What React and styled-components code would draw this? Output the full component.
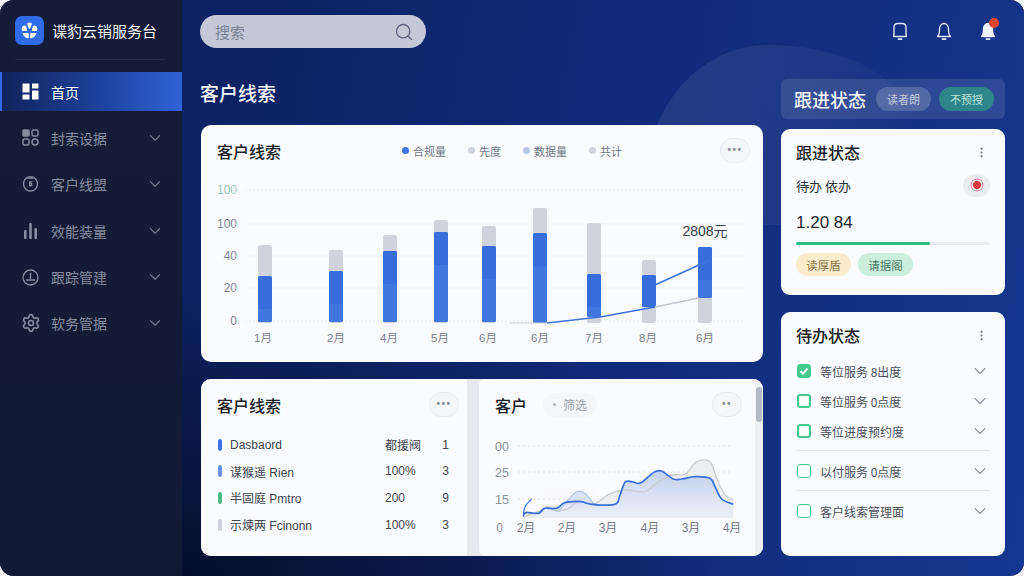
// App.jsx
import React from 'react';
import styled, { createGlobalStyle } from 'styled-components';
import { ChevronDown, Search, Settings, MoreVertical } from 'lucide-react';

const GlobalStyle = createGlobalStyle`
  html, body {
    margin: 0;
    padding: 0;
    background: #f4f6fa;
  }
  * {
    box-sizing: border-box;
  }
  body {
    font-family: 'Liberation Sans', 'Noto Sans CJK SC', sans-serif;
  }
`;

const Shell = styled.div`
  width: 1024px;
  height: 576px;
  display: flex;
  overflow: hidden;
  border-radius: 14px;
  background: #0c1f5c;
`;

const Sidebar = styled.aside`
  width: 182px;
  flex-shrink: 0;
  display: flex;
  flex-direction: column;
  background: linear-gradient(180deg, #141c37 0%, #131b36 60%, #111a35 100%);
`;

const Brand = styled.div`
  height: 60px;
  margin: 0 17px 0 15px;
  padding-top: 1px;
  display: flex;
  align-items: center;
  gap: 8px;
  border-bottom: 1px solid #222b47;
  color: #f1f4fb;
  font-size: 15px;
  font-family: 'Noto Sans CJK SC', sans-serif;
  white-space: nowrap;
`;

const LogoBox = styled.div`
  width: 29px;
  height: 29px;
  border-radius: 7px;
  background: #2f6be6;
  display: flex;
  align-items: center;
  justify-content: center;
`;

const Nav = styled.nav`
  margin-top: 12px;
  display: flex;
  flex-direction: column;
  gap: 7.4px;
`;

const NavItem = styled.div`
  height: 39px;
  display: flex;
  align-items: center;
  padding: 0 18px 0 ${(p) => (p.$active ? '20px' : '22px')};
  gap: 12px;
  font-family: 'Noto Sans CJK SC', sans-serif;
  font-size: 14px;
  color: ${(p) => (p.$active ? '#ffffff' : '#868da0')};
  background: ${(p) => (p.$active ? 'linear-gradient(90deg, #11245b 0%, #1c3f97 50%, #2f62d6 100%)' : 'transparent')};
  border-left: ${(p) => (p.$active ? '2px solid #2f6be6' : 'none')};
`;

const NavIcon = styled.span`
  width: 17px;
  display: flex;
  justify-content: center;
  flex-shrink: 0;

  svg {
    flex-shrink: 0;
  }
`;

const NavLabel = styled.span`
  flex: 1;
  white-space: nowrap;
`;

const Main = styled.main`
  position: relative;
  flex: 1;
  min-width: 0;
  padding: 15px 19px 20px 18px;
  background:
    radial-gradient(ellipse 560px 300px at 0% 100%, #050e2c 0%, rgba(5, 14, 44, 0) 100%),
    linear-gradient(100deg, #0c2160 0%, #0f2a78 50%, #16378f 100%);

  /* the pale blob behind the cards */
  &::before {
    content: '';
    position: absolute;
    left: 463px;
    top: 45px;
    width: 270px;
    height: 180px;
    border-radius: 58% 70% 0 0 / 100% 60% 0 0;
    background: linear-gradient(105deg, rgba(255, 255, 255, 0.085) 0%, rgba(255, 255, 255, 0.05) 55%, rgba(255, 255, 255, 0) 95%);
  }
`;

const TopBar = styled.div`
  position: relative;
  height: 33px;
  display: flex;
  align-items: center;
  justify-content: space-between;
`;

const SearchBox = styled.div`
  width: 226px;
  height: 33px;
  border-radius: 17px;
  background: #c4c9d8;
  display: flex;
  align-items: center;
  justify-content: space-between;
  padding: 0 12px 0 15px;
  color: #7b8296;
  font-size: 15px;
  font-family: 'Noto Sans CJK SC', sans-serif;
`;

const BellGroup = styled.div`
  display: flex;
  align-items: center;
  gap: 26px;
  margin: 1px 8px 0 0;
`;

const BellWrap = styled.div`
  position: relative;
  width: 18px;
  height: 20px;
  color: #e6ecfa;
`;

const BellDot = styled.span`
  position: absolute;
  top: -4px;
  right: -2px;
  width: 10px;
  height: 10px;
  border-radius: 50%;
  background: #e8452f;
`;

const Content = styled.div`
  position: relative;
  margin-top: 31px;
  display: grid;
  grid-template-columns: 563px 224px;
  column-gap: 18px;
`;

const LeftColumn = styled.div`
  display: flex;
  flex-direction: column;
  padding-left: 1px;
`;

const RightColumn = styled.div`
  display: flex;
  flex-direction: column;
`;

const PageTitle = styled.h1`
  margin: 0 0 18px -1px;
  height: 28px;
  line-height: 28px;
  font-size: 19px;
  font-weight: 500;
  color: #f5f7fd;
  font-family: 'Noto Sans CJK SC', sans-serif;
`;

const Card = styled.section`
  position: relative;
  background: #fafbfe;
  border-radius: ${(p) => p.$radius || '10px'};
  height: ${(p) => p.$height}px;
  overflow: hidden;
`;

const CardHeader = styled.div`
  display: flex;
  align-items: center;
  height: 50px;
  padding: ${(p) => p.$pad || '1px 13px 0 16px'};
`;

const CardTitle = styled.h2`
  margin: 0;
  font-size: 16px;
  font-weight: 500;
  color: #1b1e26;
  font-family: 'Noto Sans CJK SC', sans-serif;
  white-space: nowrap;
`;

const Legend = styled.div`
  margin-left: 121px;
  display: flex;
  gap: 22px;
`;

const LegendItem = styled.div`
  display: flex;
  align-items: center;
  gap: 4px;
  font-size: 11px;
  color: #6f7684;
  font-family: 'Noto Sans CJK SC', sans-serif;
  white-space: nowrap;

  &::before {
    content: '';
    width: 7px;
    height: 7px;
    border-radius: 50%;
    background: ${(p) => p.$color};
  }
`;

const MoreButton = styled.button`
  margin-left: auto;
  width: 30px;
  height: 25px;
  padding: 0 0 1px;
  border: 1px solid #e8eaf0;
  border-radius: 12px;
  background: #f5f6f9;
  color: #8a8f9a;
  font-size: 10px;
  font-weight: 700;
  letter-spacing: 1.5px;
  line-height: 1;
  font-family: 'Liberation Sans', sans-serif;
`;

const ChartSvg = styled.svg`
  display: block;
  font-family: 'Liberation Sans', 'Noto Sans CJK SC', sans-serif;
`;

const BottomRow = styled.div`
  margin-top: 17px;
  height: 177px;
  display: grid;
  grid-template-columns: 266px 284px;
  column-gap: 12px;
  background: #e7e9ef;
  border-radius: 10px;
`;

const LeadList = styled.div`
  padding: 0 18px 0 17px;
  margin-top: 2.500px;
`;

const LeadRow = styled.div`
  height: 26.6px;
  display: grid;
  grid-template-columns: 12px 155px 1fr auto;
  align-items: center;
  font-size: 12px;
  color: #3f4450;
  white-space: nowrap;
`;

const LeadMark = styled.span`
  width: 3.5px;
  height: 12px;
  border-radius: 2px;
  background: ${(p) => p.$color};
`;

const FilterChip = styled.span`
  margin-left: 16px;
  height: 24px;
  padding: 0 10px;
  border-radius: 12px;
  background: #f5f6f9;
  display: flex;
  align-items: center;
  gap: 7px;
  font-size: 12px;
  color: #9fa3ad;
  font-family: 'Noto Sans CJK SC', sans-serif;

  &::before {
    content: '';
    width: 3px;
    height: 3px;
    border-radius: 50%;
    background: #b5bac4;
  }
`;

const ScrollThumb = styled.div`
  position: absolute;
  top: 8px;
  right: 1px;
  width: 6px;
  height: 35px;
  border-radius: 3px;
  background: #b4b9c4;
`;

const ScrollTrack = styled.div`
  position: absolute;
  top: 0;
  right: 0;
  bottom: 0;
  width: 8px;
  background: #eef0f4;
`;

const StatusBar = styled.div`
  height: 40px;
  display: flex;
  align-items: center;
  padding: 0 10px 0 13px;
  gap: 8px;
  border-radius: 6px;
  background: rgba(255, 255, 255, 0.11);
  font-family: 'Noto Sans CJK SC', sans-serif;
`;

const StatusTitle = styled.div`
  margin-right: 2px;
  font-size: 18px;
  font-weight: 500;
  color: #f2f5fc;
  white-space: nowrap;
`;

const StatusChip = styled.span`
  width: 55px;
  height: 24px;
  border-radius: 12px;
  display: flex;
  align-items: center;
  justify-content: center;
  font-size: 11px;
  color: ${(p) => (p.$teal ? '#bfe6de' : '#c4cbdd')};
  background: ${(p) => (p.$teal ? '#2f858a' : 'rgba(255, 255, 255, 0.18)')};
  white-space: nowrap;
`;

const SideCard = styled.section`
  margin-top: ${(p) => p.$top}px;
  height: ${(p) => p.$height}px;
  padding: 13px 15px 0;
  background: #fafbfe;
  border-radius: 9px;
  font-family: 'Noto Sans CJK SC', sans-serif;
`;

const SideHead = styled.div`
  display: flex;
  align-items: center;
  justify-content: space-between;
  height: 20px;
  padding-right: 2px;
  color: #6d7280;
`;

const TodoLine = styled.div`
  margin-top: 11px;
  display: flex;
  align-items: center;
  justify-content: space-between;
  font-size: 13px;
  color: #2c3038;
  height: 24px;
`;

const RecordBadge = styled.span`
  width: 27px;
  height: 23px;
  border-radius: 11px;
  background: #ecedf1;
  display: flex;
  align-items: center;
  justify-content: center;

  &::before {
    content: '';
    width: 8px;
    height: 8px;
    border-radius: 50%;
    background: #ea3a42;
    box-shadow: 0 0 0 1.5px #f8f8fa, 0 0 0 2.5px #e58a8f;
  }
`;

const BigNumber = styled.div`
  margin-top: 14px;
  font-size: 17px;
  line-height: 24px;
  color: #22262e;
  font-family: 'Liberation Sans', sans-serif;
`;

const Progress = styled.div`
  margin-top: 7px;
  height: 3px;
  border-radius: 2px;
  background: #e9ebef;
`;

const ProgressFill = styled.div`
  height: 100%;
  border-radius: 2px;
  background: #2fbd82;
`;

const TagRow = styled.div`
  margin-top: 8px;
  display: flex;
  gap: 7px;
`;

const Tag = styled.span`
  width: 55px;
  height: 23px;
  border-radius: 12px;
  display: flex;
  align-items: center;
  justify-content: center;
  font-size: 11.5px;
  color: ${(p) => (p.$green ? '#4d7a66' : '#8a7347')};
  background: ${(p) => (p.$green ? '#cbeedd' : '#fbeccb')};
  white-space: nowrap;
`;

const TodoList = styled.div`
  margin-top: 11px;
`;

const TodoRow = styled.div`
  height: 30px;
  display: flex;
  align-items: center;
  gap: 9px;
  padding-left: 1px;
  font-size: 12px;
  color: #4a4f5a;
  white-space: nowrap;
`;

const CheckBox = styled.span`
  width: 14px;
  height: 14px;
  flex-shrink: 0;
  border-radius: 3px;
  border: ${(p) => (p.$heavy ? '2px' : '1.7px')} solid #45c98c;
  background: ${(p) => (p.$checked ? '#45c98c' : '#fff')};
  display: flex;
  align-items: center;
  justify-content: center;
`;

const TodoText = styled.span`
  flex: 1;
`;

const Rule = styled.div`
  height: 1px;
  margin: 4px 0 5px;
  background: #e8eaee;
`;

// bar data: x, top of grey, top of blue, bottom of blue, label centre
const bars = [
  { x: 258, grey: 245, blue: 276, end: 322, label: '1月', lx: 263 },
  { x: 329, grey: 250, blue: 271, end: 322, label: '2月', lx: 336 },
  { x: 383, grey: 235, blue: 251, end: 322, label: '4月', lx: 389 },
  { x: 434, grey: 220, blue: 232, end: 322, label: '5月', lx: 440 },
  { x: 482, grey: 226, blue: 246, end: 322, label: '6月', lx: 488 },
  { x: 533, grey: 208, blue: 233, end: 323, label: '6月', lx: 540 },
  { x: 587, grey: 223, blue: 274, end: 317, label: '7月', lx: 594 },
  { x: 642, grey: 260, blue: 275, end: 307, label: '8月', lx: 648 },
  { x: 698, grey: 247, blue: 247, end: 298, label: '6月', lx: 705 },
];

const yTicks = [
  { y: 190, text: '100', color: '#9cc7b6' },
  { y: 224, text: '100', color: '#7e8490' },
  { y: 256, text: '40', color: '#7e8490' },
  { y: 288, text: '20', color: '#7e8490' },
  { y: 321, text: '0', color: '#7e8490' },
];

const BarChart = () => (
  <ChartSvg width="562" height="187" viewBox="201 175 562 187">
    {yTicks.map((t) => (
      <g key={t.y}>
        <text x="237" y={t.y + 4} textAnchor="end" fontSize="12" fill={t.color}>{t.text}</text>
        <line x1="245" x2="745" y1={t.y} y2={t.y} stroke="#eceef2" strokeDasharray="2 2" />
      </g>
    ))}
    {bars.map((b) => (
      <g key={b.x + b.label}>
        <rect x={b.x} y={b.grey} width="14" height={323 - b.grey} rx="2" fill="#d0d3db" />
        <rect x={b.x} y={b.blue} width="14" height={b.end - b.blue} rx="1.5" fill="#4076e0" />
        <rect x={b.x} y={b.blue} width="14" height={Math.min(33, b.end - b.blue)} rx="1.5" fill="#2f65d8" opacity="0.45" />
        <text x={b.lx} y="342" textAnchor="middle" fontSize="11.5" fill="#7c808a">{b.label}</text>
      </g>
    ))}
    <polyline points="510,323 547,323" fill="none" stroke="#c9cdd6" strokeWidth="1" />
    <polyline points="547,323 600,317 655,307" fill="none" stroke="#3f73dc" strokeWidth="1.6" />
    <polyline points="655,307 699,298" fill="none" stroke="#c4c7d0" strokeWidth="1.4" />
    <polyline points="655,285 710,260" fill="none" stroke="#3f73dc" strokeWidth="1.6" />
    <text x="705" y="236" textAnchor="middle" fontSize="14" fill="#3a3e47">2808元</text>
  </ChartSvg>
);

// catmull-rom through points read off the picture
const smooth = (pts) => {
  let d = `M${pts[0][0]} ${pts[0][1]}`;
  for (let i = 0; i < pts.length - 1; i++) {
    const p0 = pts[i - 1] || pts[i];
    const p1 = pts[i];
    const p2 = pts[i + 1];
    const p3 = pts[i + 2] || p2;
    const c1x = p1[0] + (p2[0] - p0[0]) / 6;
    const c1y = p1[1] + (p2[1] - p0[1]) / 6;
    const c2x = p2[0] - (p3[0] - p1[0]) / 6;
    const c2y = p2[1] - (p3[1] - p1[1]) / 6;
    d += ` C${c1x.toFixed(1)} ${c1y.toFixed(1)} ${c2x.toFixed(1)} ${c2y.toFixed(1)} ${p2[0].toFixed(1)} ${p2[1].toFixed(1)}`;
  }
  return d;
};

const toPage = (list) => list.map(([x, y]) => [475 + x / 3, 375 + y / 3]);

const bluePts = toPage([[145, 420], [155, 412], [190, 415], [210, 400], [245, 400], [265, 385], [290, 380], [320, 380], [350, 388], [420, 388], [435, 360], [450, 322], [470, 320], [495, 325], [520, 305], [540, 290], [560, 288], [595, 312], [620, 312], [660, 305], [705, 310], [720, 335], [740, 372], [775, 388]]);
const greyPts = toPage([[145, 425], [190, 410], [215, 395], [250, 408], [280, 400], [310, 380], [360, 385], [400, 358], [450, 345], [510, 350], [550, 320], [590, 300], [630, 298], [665, 260], [705, 260], [725, 310], [750, 360], [775, 375]]);
const lightPts = toPage([[215, 395], [250, 408], [270, 385], [305, 350], [330, 355], [355, 385]]);
const hookPts = toPage([[145, 425], [150, 395], [170, 372]]);

const areaMonths = [
  { x: 526, t: '2月' },
  { x: 567, t: '2月' },
  { x: 608, t: '3月' },
  { x: 650, t: '4月' },
  { x: 691, t: '3月' },
  { x: 732, t: '4月' },
];

const areaTicks = [
  { y: 446, t: '00' },
  { y: 472, t: '25' },
  { y: 499, t: '15' },
];

const AreaChart = () => (
  <ChartSvg width="284" height="127" viewBox="479 429 284 127">
    <defs>
      <linearGradient id="areaBlue" x1="0" x2="0" y1="0" y2="1">
        <stop offset="0" stopColor="#b4c7ec" stopOpacity="0.8" />
        <stop offset="1" stopColor="#e9eef9" stopOpacity="0.6" />
      </linearGradient>
    </defs>
    {areaTicks.map((t) => (
      <g key={t.y}>
        <text x="509" y={t.y + 5} textAnchor="end" fontSize="12.5" fill="#8b909b">{t.t}</text>
        <line x1="518" x2="733" y1={t.y} y2={t.y} stroke="#e3e5ea" strokeDasharray="2 3" />
      </g>
    ))}
    <text x="503" y="532" textAnchor="end" fontSize="12" fill="#8b909b">0</text>
    <path d={`${smooth(greyPts)} L733 518 L523 518 Z`} fill="#eaebef" opacity="0.8" />
    <path d={`${smooth(bluePts)} L733 518 L523 518 Z`} fill="url(#areaBlue)" />
    <path d={smooth(lightPts)} fill="#d3ddf3" opacity="0.8" stroke="#9db8ea" strokeWidth="1.2" />
    <path d={smooth(greyPts)} fill="none" stroke="#c9cad0" strokeWidth="1.3" />
    <path d={smooth(hookPts)} fill="none" stroke="#4f80e2" strokeWidth="1.4" />
    <path d={smooth(bluePts)} fill="none" stroke="#3a70dd" strokeWidth="1.7" />
    {areaMonths.map((m) => (
      <text key={m.x} x={m.x} y="532" textAnchor="middle" fontSize="12" fill="#7c808a">{m.t}</text>
    ))}
  </ChartSvg>
);

const LogoMark = () => (
  <svg width="19" height="19" viewBox="0 0 20 20" fill="#fff">
    <path d="M8 2.2c1.2-.9 3-.9 4 0 .5.5.4 1.3.1 2L11 7.4c-.3.9-1.7.9-2 0L7.9 4.2c-.3-.7-.4-1.5.1-2z" />
    <path d="M2.2 6.5c.5-1.3 2-2 3-1.700.8.2 1.3.9 1.6 1.700l.7 2.700c.2.9-.4 1.400-1.200 1.400H3.600c-1.200 0-2-.9-1.900-2 .1-.8.2-1.400.5-2.100z" />
    <path d="M17.800 6.500c-.5-1.300-2-2-3-1.700-.8.2-1.300.9-1.600 1.700l-.7 2.700c-.2.9.4 1.400 1.200 1.400h2.700c1.200 0 2-.9 1.900-2-.1-.8-.2-1.400-.5-2.100z" />
    <path d="M3 12.600h5.300c.6 0 1 .5 1 1v3.900c0 .5-.6.900-1.100.7C5.700 17.800 3.700 15.900 2.800 13.500c-.2-.4 0-.9.200-.9z" />
    <path d="M17 12.600h-5.300c-.6 0-1 .5-1 1v3.900c0 .5.600.9 1.100.7 2.500-.4 4.500-2.300 5.400-4.700.2-.4 0-.9-.2-.9z" />
  </svg>
);

const HomeIcon = () => (
  <svg width="17" height="17" viewBox="0 0 17 17" fill="#fff">
    <rect x="0.500" y="0.500" width="7" height="9" rx="0.500" />
    <rect x="10" y="0.500" width="6.500" height="5" rx="0.500" />
    <rect x="0.500" y="11.500" width="7" height="5" rx="0.500" />
    <rect x="10" y="7.500" width="6.500" height="9" rx="0.500" />
  </svg>
);

const GridIcon = () => (
  <svg width="17" height="17" viewBox="0 0 17 17" fill="none" stroke="#868da0" strokeWidth="1.500">
    <rect x="1" y="1" width="6" height="6" rx="1" fill="#868da0" />
    <rect x="10" y="1" width="6" height="6" rx="1.500" />
    <rect x="1" y="10" width="6" height="6" rx="1.500" />
    <rect x="10" y="10" width="6" height="6" rx="3" />
  </svg>
);

const WatchIcon = () => (
  <svg width="17" height="18" viewBox="0 0 17 18" fill="none" stroke="#868da0" strokeWidth="1.300" strokeLinecap="round">
    <path d="M6 1.800h5" />
    <path d="M4.500 3h8c1.800 1.400 3 3.600 3 6a7 7 0 0 1-14 0c0-2.400 1.200-4.600 3-6z" />
    <path d="M10 6.800H7.700v3.800h2V8.700H7.800" />
  </svg>
);

const StatsIcon = () => (
  <svg width="17" height="17" viewBox="0 0 17 17" fill="#868da0">
    <rect x="2" y="8" width="2.600" height="9" rx="1" />
    <rect x="7.200" y="1" width="2.600" height="16" rx="1" />
    <rect x="12.400" y="6" width="2.600" height="11" rx="1" />
  </svg>
);

const ClockIcon = () => (
  <svg width="17" height="17" viewBox="0 0 17 17" fill="none" stroke="#868da0" strokeWidth="1.300" strokeLinecap="round">
    <circle cx="8.500" cy="8.500" r="7.500" />
    <path d="M8.500 4.500v5" />
    <path d="M4.500 11h8" />
  </svg>
);

const navItems = [
  { label: '首页', icon: <HomeIcon />, active: true },
  { label: '封索设据', icon: <GridIcon /> },
  { label: '客户线盟', icon: <WatchIcon /> },
  { label: '效能装量', icon: <StatsIcon /> },
  { label: '跟踪管建', icon: <ClockIcon /> },
  { label: '软务管据', icon: <Settings size={20} strokeWidth={2} color="#868da0" /> },
];

// the three bells in the picture differ: square-topped, round, filled
const squareBell = 'M2.500 14.500C3.300 13.500 3 12 3 10V5.500C3 3 4.500 1.500 7 1.500h4C13.500 1.500 15 3 15 5.500V10c0 2-.3 3.500.5 4.500z';
const roundBell = 'M2.500 14.500C4 13 4.500 11.500 4.500 9V7a4.500 5.500 0 0 1 9 0v2c0 2.500.5 4 2 5.500z';

const BellIcon = ({ d, filled }) => (
  <svg width="18" height="20" viewBox="0 0 18 20" fill={filled ? '#eef2fb' : 'none'} stroke={filled ? '#eef2fb' : '#dfe6f8'} strokeWidth="1.400" strokeLinejoin="round">
    <path d={d} />
    <rect x="6.500" y="16.300" width="5" height="1.600" rx="0.800" fill="#dfe6f8" stroke="none" />
  </svg>
);

const leads = [
  { color: '#3f73e4', name: 'Dasbaord', value: '都援阀', count: '1' },
  { color: '#6a90e8', name: '谋猴遥 Rien', value: '100%', count: '3' },
  { color: '#4dbb86', name: '半固庭 Pmtro', value: '200', count: '9' },
  { color: '#cfd2d8', name: '示煉两 Fcinonn', value: '100%', count: '3' },
];

const todosTop = [
  { text: '等位服务 8出度', checked: true },
  { text: '等位服务 0点度', heavy: true },
  { text: '等位进度预约度', heavy: true },
];

const progress = (134 / 194) * 100;

const App = () => {
  return (
    <>
      <GlobalStyle />
      <Shell>
        <Sidebar>
          <Brand>
            <LogoBox>
              <LogoMark />
            </LogoBox>
            谍豹云销服务台
          </Brand>
          <Nav>
            {navItems.map((item) => (
              <NavItem key={item.label} $active={item.active}>
                <NavIcon>{item.icon}</NavIcon>
                <NavLabel>{item.label}</NavLabel>
                {!item.active && <ChevronDown size={18} strokeWidth={1.6} color="#6f7689" />}
              </NavItem>
            ))}
          </Nav>
        </Sidebar>

        <Main>
          <TopBar>
            <SearchBox>
              搜索
              <Search size={20} strokeWidth={1.7} color="#5f6880" />
            </SearchBox>
            <BellGroup>
              <BellWrap><BellIcon d={squareBell} /></BellWrap>
              <BellWrap><BellIcon d={roundBell} /></BellWrap>
              <BellWrap>
                <BellIcon d={roundBell} filled />
                <BellDot />
              </BellWrap>
            </BellGroup>
          </TopBar>

          <Content>
            <LeftColumn>
              <PageTitle>客户线索</PageTitle>
              <Card $height={237}>
                <CardHeader>
                  <CardTitle>客户线索</CardTitle>
                  <Legend>
                    <LegendItem $color="#3f73dc">合规量</LegendItem>
                    <LegendItem $color="#cfd2da">先度</LegendItem>
                    <LegendItem $color="#b5c6ea">数据量</LegendItem>
                    <LegendItem $color="#cfd2da">共计</LegendItem>
                  </Legend>
                  <MoreButton>•••</MoreButton>
                </CardHeader>
                <BarChart />
              </Card>
              <BottomRow>
                <Card $height={177} $radius="10px 2px 2px 10px">
                  <CardHeader $pad="1px 8px 0 16px">
                    <CardTitle>客户线索</CardTitle>
                    <MoreButton>•••</MoreButton>
                  </CardHeader>
                  <LeadList>
                    {leads.map((row) => (
                      <LeadRow key={row.name}>
                        <LeadMark $color={row.color} />
                        <span>{row.name}</span>
                        <span>{row.value}</span>
                        <span>{row.count}</span>
                      </LeadRow>
                    ))}
                  </LeadList>
                </Card>
                <Card $height={177} $radius="6px 10px 10px 6px">
                  <CardHeader $pad="1px 21px 0 16px">
                    <CardTitle>客户</CardTitle>
                    <FilterChip>筛选</FilterChip>
                    <MoreButton>••</MoreButton>
                  </CardHeader>
                  <AreaChart />
                  <ScrollTrack />
                  <ScrollThumb />
                </Card>
              </BottomRow>
            </LeftColumn>

            <RightColumn>
              <StatusBar>
                <StatusTitle>跟进状态</StatusTitle>
                <StatusChip>读者朗</StatusChip>
                <StatusChip $teal>不预授</StatusChip>
              </StatusBar>

              <SideCard $top={10} $height={166}>
                <SideHead>
                  <CardTitle>跟进状态</CardTitle>
                  <MoreVertical size={13} />
                </SideHead>
                <TodoLine>
                  待办 依办
                  <RecordBadge />
                </TodoLine>
                <BigNumber>1.20 84</BigNumber>
                <Progress>
                  <ProgressFill style={{ width: `${progress}%` }} />
                </Progress>
                <TagRow>
                  <Tag>读厚盾</Tag>
                  <Tag $green>请据阁</Tag>
                </TagRow>
              </SideCard>

              <SideCard $top={17} $height={244}>
                <SideHead>
                  <CardTitle>待办状态</CardTitle>
                  <MoreVertical size={13} />
                </SideHead>
                <TodoList>
                  {todosTop.map((t) => (
                    <TodoRow key={t.text}>
                      <CheckBox $checked={t.checked} $heavy={t.heavy}>
                        {t.checked && (
                          <svg width="10" height="10" viewBox="0 0 10 10" fill="none" stroke="#fff" strokeWidth="2">
                            <path d="M1.500 5.200 4 7.500 8.500 2.500" />
                          </svg>
                        )}
                      </CheckBox>
                      <TodoText>{t.text}</TodoText>
                      <ChevronDown size={20} strokeWidth={1.300} color="#8d929c" />
                    </TodoRow>
                  ))}
                  <Rule />
                  <TodoRow>
                    <CheckBox />
                    <TodoText>以付服务 0点度</TodoText>
                    <ChevronDown size={20} strokeWidth={1.300} color="#8d929c" />
                  </TodoRow>
                  <Rule />
                  <TodoRow>
                    <CheckBox />
                    <TodoText>客户线索管理面</TodoText>
                    <ChevronDown size={20} strokeWidth={1.300} color="#8d929c" />
                  </TodoRow>
                </TodoList>
              </SideCard>
            </RightColumn>
          </Content>
        </Main>
      </Shell>
    </>
  );
};

export default App;
